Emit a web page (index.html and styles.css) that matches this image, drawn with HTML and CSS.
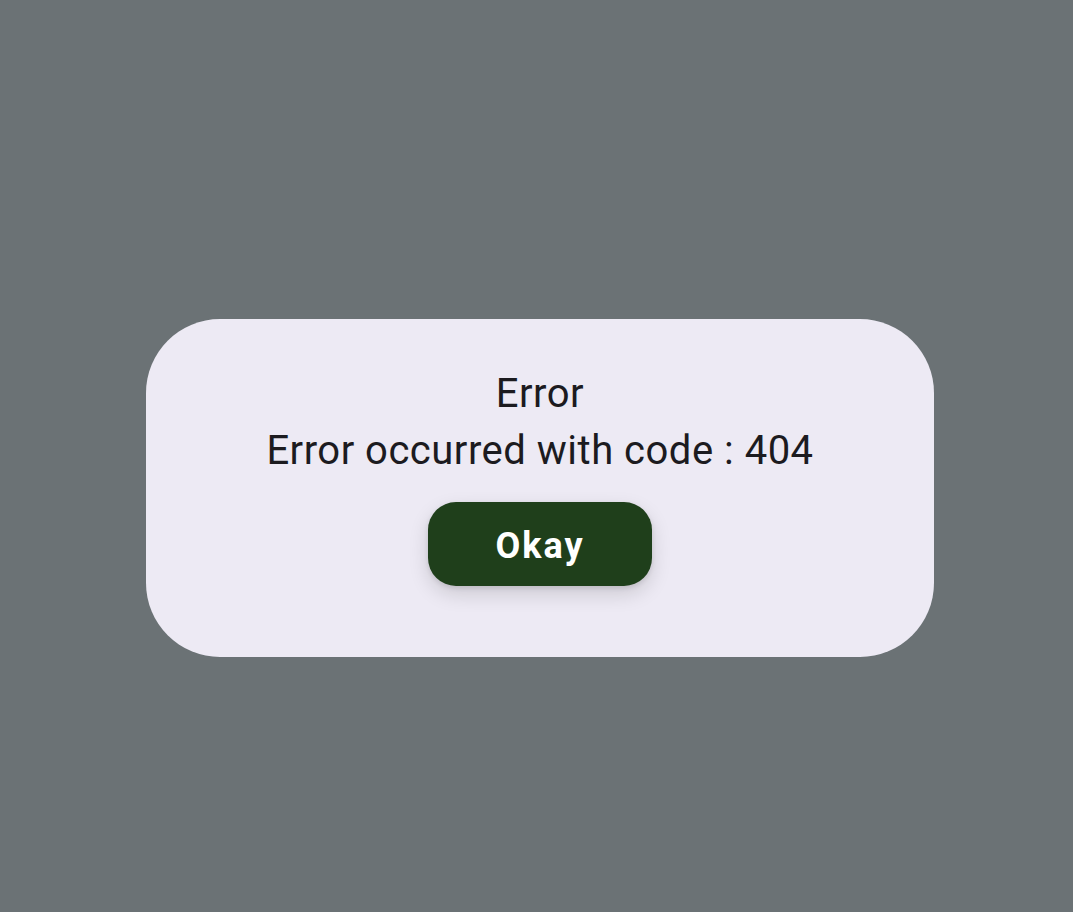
FILE: index.html
```html
<!DOCTYPE html>
<html>
<head>
<meta charset="utf-8">
<link rel="stylesheet" href="styles.css">
</head>
<body>
<div class="dialog">
  <div class="title">Error</div>
  <div class="message">Error occurred with code : 404</div>
  <button class="okay">Okay</button>
</div>
</body>
</html>
```
FILE: styles.css
```css
html, body {
  margin: 0;
  height: 100%;
}
body {
  background: #6b7275;
  font-family: Roboto, "Noto Sans", sans-serif;
  padding: 319px 0 0 146px;
  box-sizing: border-box;
}
.dialog {
  width: 788px;
  height: 338px;
  box-sizing: border-box;
  background: #edeaf4;
  border-radius: 74px;
  display: flex;
  flex-direction: column;
  align-items: center;
  padding-top: 46px;
  color: #1c1b1f;
}
.title, .message {
  font-size: 40px;
  line-height: 57px;
  letter-spacing: 0.5px;
}
.okay {
  margin-top: 23px;
  width: 224px;
  height: 84px;
  border: none;
  border-radius: 28px;
  background: #1f3f1b;
  color: #ffffff;
  font-family: Roboto, sans-serif;
  font-weight: 700;
  font-size: 36px;
  letter-spacing: 2px;
  box-shadow: 0 8px 20px rgba(0,0,0,0.14), 0 2px 5px rgba(0,0,0,0.10);
  padding: 4px 0 0 0;
}
```
